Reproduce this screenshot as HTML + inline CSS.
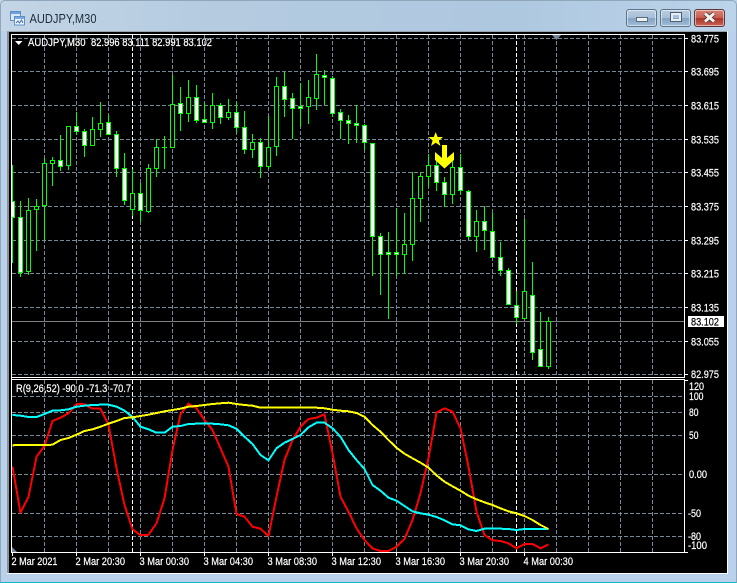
<!DOCTYPE html>
<html><head><meta charset="utf-8"><style>
html,body{margin:0;padding:0;background:#fff;width:737px;height:583px;overflow:hidden}
#w{position:absolute;left:0;top:0;width:737px;height:583px;overflow:hidden;background:#b9d1ea}
#bar{position:absolute;left:0;top:0;width:737px;height:31px;background:linear-gradient(90deg,#c3d5e6,#b4cbe0 30%,#aec8e0 70%,#bcd4ea)}
#edge{position:absolute;left:0;top:0;width:735px;height:581px;border:1px solid #8fa6bb;border-bottom:1px solid #12b6c9;border-radius:5px 5px 0 0}
.b{position:absolute;top:9px;height:16px;border:1px solid #5d7387;border-radius:3px;box-shadow:inset 0 0 0 1px rgba(255,255,255,.5)}
.m{background:linear-gradient(#b8cde1 0,#a6c0d9 48%,#84a3c1 52%,#a0bdd8 100%)}
.c{background:linear-gradient(#d68478 0,#c85e52 48%,#aa3428 52%,#c96454 100%);border-color:#5a3a3a}
#s{position:absolute;left:0;top:0}
text{font-family:"Liberation Sans",sans-serif;font-size:11px;fill:#fff;stroke:#fff;stroke-width:.22px}
</style></head><body><div id="w">
<div id="bar"></div>
<div id="edge"></div>
<svg style="position:absolute;left:10px;top:11px" width="16" height="15" viewBox="0 0 16 15">
<rect x="0.5" y="0.5" width="10" height="9" fill="#dbe9f7" stroke="#5e8fc8"/><rect x="1" y="1" width="9" height="2" fill="#6fa0da"/>
<rect x="4.5" y="5.5" width="10" height="8.5" fill="#eef5fc" stroke="#5e8fc8"/><rect x="5" y="6" width="9" height="2" fill="#7eaade"/>
<path d="M6 12l2-2 1.500 2 2-3 1.500 3" fill="none" stroke="#3f6fae"/></svg>
<div class="b m" style="left:626px;width:29px"><div style="position:absolute;left:9px;top:7px;width:10px;height:3px;background:#eef2f6;border:1px solid #5b6c7c"></div></div>
<div class="b m" style="left:660px;width:29px"><div style="position:absolute;left:10px;top:3px;width:6px;height:4px;border:2px solid #e8edf2;outline:1px solid #4f6070"></div></div>
<div class="b c" style="left:694px;width:29px"><svg style="position:absolute;left:7px;top:1px" width="15" height="13"><path d="M3 2.500L12 10.500M12 2.500L3 10.500" stroke="#3b2a2a" stroke-width="4.500"/><path d="M3 2.500L12 10.500M12 2.500L3 10.500" stroke="#f4f0ee" stroke-width="3"/></svg></div>
<svg id="s" width="737" height="583" viewBox="0 0 737 583">
<defs><clipPath id="cm"><rect x="12" y="35" width="672" height="342"/></clipPath><clipPath id="cs"><rect x="12" y="380" width="672" height="172"/></clipPath></defs>
<text x="29.500" y="23" textLength="67" lengthAdjust="spacingAndGlyphs" style="font-size:12.500px;fill:#1c2c3c;stroke:none">AUDJPY,M30</text>
<rect x="9" y="31" width="718" height="542" fill="#000"/>
<rect x="7" y="31" width="2" height="543" fill="#8b9298"/>
<rect x="7" y="31" width="720" height="1" fill="#9aa5ae"/>
<g shape-rendering="crispEdges" fill="none">
<path d="M727.500 31V574M7 573.500H728" stroke="#fff"/>
<path d="M11.500 34V553M11 34.500H685M684.500 34V378M11 377.500H685M11 379.500H685M684.500 379V553M11 552.500H685" stroke="#fff"/>
<path stroke="#778899" stroke-dasharray="4 2" d="M12 38.500H684M12 71.500H684M12 105.500H684M12 139.500H684M12 172.500H684M12 206.500H684M12 240.500H684M12 273.500H684M12 307.500H684M12 341.500H684M12 374.500H684M12 396.500H684M12 412.500H684M12 435.500H684M12 474.500H684M12 513.500H684M12 536.500H684"/>
<path stroke="#778899" stroke-dasharray="4 2" d="M44.500 35V377M76.500 35V377M108.500 35V377M140.500 35V377M172.500 35V377M204.500 35V377M236.500 35V377M268.500 35V377M300.500 35V377M332.500 35V377M364.500 35V377M396.500 35V377M428.500 35V377M460.500 35V377M492.500 35V377M524.500 35V377M556.500 35V377M588.500 35V377M620.500 35V377M652.500 35V377M44.500 380V552M76.500 380V552M108.500 380V552M140.500 380V552M172.500 380V552M204.500 380V552M236.500 380V552M268.500 380V552M300.500 380V552M332.500 380V552M364.500 380V552M396.500 380V552M428.500 380V552M460.500 380V552M492.500 380V552M524.500 380V552M556.500 380V552M588.500 380V552M620.500 380V552M652.500 380V552"/>
<path stroke="#fff" stroke-dasharray="4 2" d="M132.500 35V377M132.500 380V552M516.500 35V377M516.500 380V552"/>
<path stroke="#808080" d="M12 321.500H684"/>
<g clip-path="url(#cm)">
<path stroke="#00ff00" d="M12.500 165V263M20.500 201V277M28.500 198V275M36.500 199V251M44.500 158V240M52.500 157V186M60.500 135V171M68.500 126V170M76.500 112V135M84.500 129V157M92.500 117V146M100.500 102V137M108.500 115V135M116.500 131V177M124.500 153V205M132.500 169V216M140.500 183V222M148.500 164V213M156.500 139V177M164.500 136V169M172.500 75V147M180.500 87V131M188.500 80V122M196.500 85V123M204.500 103V123M212.500 93V129M220.500 103V124M228.500 99V120M236.500 102V133M244.500 111V154M252.500 134V158M260.500 138V178M268.500 116V169M276.500 77V156M284.500 72V117M292.500 93V139M300.500 83V127M308.500 80V124M316.500 54V110M324.500 70V105M332.500 76V117M340.500 109V139M348.500 115V144M356.500 105V143M364.500 124V150M372.500 143V276M380.500 233V295M388.500 232V319M396.500 208V276M404.500 213V274M412.500 172V261M420.500 172V222M428.500 154V187M436.500 160V191M444.500 177V207M452.500 155V204M460.500 154V195M468.500 190V240M476.500 210V252M484.500 206V250M492.500 213V258M500.500 242V276M508.500 268V305M516.500 291V324M524.500 219V318M532.500 262V360M540.500 312V367M548.500 317V369M162 147.500H167"/>
<path stroke="#00ff00" fill="#fff" d="M10.500 201.500h4v16h-4zM18.500 217.500h4v55h-4zM58.500 160.500h4v6h-4zM74.500 126.500h4v5h-4zM82.500 131.500h4v14h-4zM106.500 122.500h4v12h-4zM114.500 134.500h4v34h-4zM122.500 168.500h4v32h-4zM138.500 193.500h4v17h-4zM178.500 103.500h4v10h-4zM194.500 97.500h4v23h-4zM202.500 119.500h4v3h-4zM218.500 105.500h4v12h-4zM234.500 112.500h4v15h-4zM242.500 127.500h4v22h-4zM258.500 142.500h4v24h-4zM282.500 86.500h4v13h-4zM290.500 98.500h4v10h-4zM298.500 106.500h4v2h-4zM322.500 75.500h4v2h-4zM330.500 78.500h4v35h-4zM338.500 112.500h4v8h-4zM346.500 120.500h4v3h-4zM354.500 123.500h4v2h-4zM362.500 125.500h4v17h-4zM370.500 143.500h4v93h-4zM378.500 236.500h4v18h-4zM386.500 252.500h4v2h-4zM394.500 252.500h4v2h-4zM434.500 165.500h4v17h-4zM442.500 182.500h4v12h-4zM458.500 167.500h4v23h-4zM466.500 191.500h4v45h-4zM482.500 221.500h4v9h-4zM490.500 231.500h4v26h-4zM498.500 257.500h4v13h-4zM506.500 270.500h4v34h-4zM514.500 305.500h4v12h-4zM530.500 295.500h4v57h-4zM538.500 349.500h4v17h-4z"/>
<path stroke="#00ff00" fill="#000" d="M26.500 210.500h4v61h-4zM34.500 206.500h4v3h-4zM42.500 163.500h4v42h-4zM50.500 160.500h4v3h-4zM66.500 126.500h4v39h-4zM90.500 129.500h4v16h-4zM98.500 123.500h4v6h-4zM130.500 193.500h4v16h-4zM146.500 168.500h4v43h-4zM154.500 147.500h4v21h-4zM170.500 104.500h4v43h-4zM186.500 97.500h4v16h-4zM210.500 105.500h4v17h-4zM226.500 112.500h4v5h-4zM250.500 142.500h4v7h-4zM266.500 147.500h4v19h-4zM274.500 86.500h4v60h-4zM306.500 97.500h4v9h-4zM314.500 74.500h4v24h-4zM402.500 244.500h4v10h-4zM410.500 198.500h4v46h-4zM418.500 176.500h4v22h-4zM426.500 165.500h4v11h-4zM450.500 167.500h4v27h-4zM474.500 221.500h4v15h-4zM522.500 291.500h4v27h-4zM546.500 321.500h4v45h-4z"/>
</g>
<g clip-path="url(#cs)" stroke-width="2" stroke-linejoin="round">
<polyline stroke="#ff0000" points="12.500,466.700 20.500,512.700 28.500,496.700 36.500,456.700 44.500,446 52.500,421 60.500,417.700 68.500,413.300 76.500,404 84.500,404.300 92.500,408.700 100.500,408.700 108.500,425 116.500,468.300 124.500,505 132.500,529.300 140.500,535.300 148.500,534.700 156.500,523.300 164.500,498.300 172.500,450 180.500,414.300 188.500,403.700 196.500,408.300 204.500,420 212.500,430 220.500,448.300 228.500,466.700 236.500,514 244.500,516.700 252.500,526.700 260.500,528.700 268.500,536 276.500,496.700 284.500,460 292.500,440 300.500,426.700 308.500,419 316.500,417.700 324.500,414.300 332.500,453.300 340.500,496.700 348.500,511.700 356.500,528.300 364.500,540 372.500,548.300 380.500,551 388.500,551 396.500,546.700 404.500,539 412.500,520 420.500,493.300 428.500,458.300 436.500,412.700 444.500,408.300 452.500,411.700 460.500,428.300 468.500,466.700 476.500,511.700 484.500,535 492.500,540.300 500.500,541 508.500,543.300 516.500,548.300 524.500,544 532.500,544 540.500,548.300 548.500,544.300"/>
<polyline stroke="#00ffff" points="12.500,415 20.500,415.700 28.500,417 36.500,417 44.500,414 52.500,410.700 60.500,410.300 68.500,409.300 76.500,406.700 84.500,405.700 92.500,405 100.500,404.700 108.500,404.700 116.500,406.700 124.500,410.700 132.500,417 140.500,426.700 148.500,429.300 156.500,432.700 164.500,432.700 172.500,426.700 180.500,426 188.500,424 196.500,423.700 204.500,423.700 212.500,423.700 220.500,424.300 228.500,425.300 236.500,428.700 244.500,436.700 252.500,444 260.500,455 268.500,460.300 276.500,448.300 284.500,442.700 292.500,439 300.500,435 308.500,427.300 316.500,422.700 324.500,422.700 332.500,428.300 340.500,436.700 348.500,450 356.500,460 364.500,469 372.500,485 380.500,490.700 388.500,497.700 396.500,500.700 404.500,506 412.500,511.300 420.500,513.300 428.500,514.700 436.500,517 444.500,520.300 452.500,524.300 460.500,525.300 468.500,529.300 476.500,531 484.500,528.700 492.500,528.700 500.500,528.700 508.500,529 516.500,530 524.500,529 532.500,529 540.500,529 548.500,529"/>
<polyline stroke="#ffff00" points="12.500,445.300 20.500,445 44.500,445 52.500,444.700 60.500,440 68.500,438 76.500,434.700 84.500,431 92.500,429.300 100.500,426.700 108.500,423.700 116.500,421 124.500,418 132.500,417.300 140.500,416 148.500,414.700 156.500,413 164.500,411.300 172.500,410 180.500,408.700 188.500,406.700 196.500,406 204.500,405 212.500,404 220.500,403.300 228.500,402.700 236.500,404 244.500,405 252.500,405.700 260.500,407.700 316.500,407.700 324.500,408.300 332.500,409.700 340.500,410.700 348.500,411.300 356.500,413 364.500,416.700 372.500,425 380.500,431.700 388.500,440 396.500,447.700 404.500,453.700 412.500,458.300 420.500,462.700 428.500,467.700 436.500,475.300 444.500,481.700 452.500,486.300 460.500,490.700 468.500,495.700 476.500,499.300 484.500,502.300 492.500,505 500.500,508.300 508.500,511.300 516.500,513.300 524.500,516 532.500,520 540.500,525 548.500,529"/>
</g>
<path stroke="#fff" d="M12.500 553V556M76.500 553V556M140.500 553V556M204.500 553V556M268.500 553V556M332.500 553V556M396.500 553V556M460.500 553V556M524.500 553V556M685 38.500H688M685 71.500H688M685 105.500H688M685 139.500H688M685 172.500H688M685 206.500H688M685 240.500H688M685 273.500H688M685 307.500H688M685 341.500H688M685 374.500H688M685 380.500H688M685 552.500H688"/>
</g>
<path d="M552 35H561L556.500 40Z" fill="#778899"/>
<path d="M12 547L17 552H12Z" fill="#778899"/>
<path d="M15 41H22.500L18.700 45Z" fill="#fff"/>
<polygon points="435.700,132 437.600,137 443,137 438.800,140.500 440.500,146 435.700,142.800 431,146 432.600,140.500 428.500,137 433.800,137" fill="#ffff00"/>
<polygon points="442,145 447,145 447,158 454,152 454,160 444.500,168.500 435,160 435,152 442,158" fill="#ffff00"/>
<rect x="688" y="316" width="36" height="11" fill="#fff"/>
<text x="691" y="325.500" textLength="28" lengthAdjust="spacingAndGlyphs" style="fill:#000;stroke:#000">83.102</text>
<text x="28" y="46" textLength="57.500" lengthAdjust="spacingAndGlyphs">AUDJPY,M30</text>
<text x="91" y="46" textLength="121" lengthAdjust="spacingAndGlyphs">82.996 83.111 82.991 83.102</text>
<text x="16" y="392" textLength="115" lengthAdjust="spacingAndGlyphs">R(9,26,52) -90.0 -71.3 -70.7</text>
<g>
<text x="691" y="42.500" textLength="28" lengthAdjust="spacingAndGlyphs">83.775</text>
<text x="691" y="75.500" textLength="28" lengthAdjust="spacingAndGlyphs">83.695</text>
<text x="691" y="109.500" textLength="28" lengthAdjust="spacingAndGlyphs">83.615</text>
<text x="691" y="143.500" textLength="28" lengthAdjust="spacingAndGlyphs">83.535</text>
<text x="691" y="176.500" textLength="28" lengthAdjust="spacingAndGlyphs">83.455</text>
<text x="691" y="210.500" textLength="28" lengthAdjust="spacingAndGlyphs">83.375</text>
<text x="691" y="244.500" textLength="28" lengthAdjust="spacingAndGlyphs">83.295</text>
<text x="691" y="277.500" textLength="28" lengthAdjust="spacingAndGlyphs">83.215</text>
<text x="691" y="311.500" textLength="28" lengthAdjust="spacingAndGlyphs">83.135</text>
<text x="691" y="345.500" textLength="28" lengthAdjust="spacingAndGlyphs">83.055</text>
<text x="691" y="378" textLength="28" lengthAdjust="spacingAndGlyphs">82.975</text>
<text x="689" y="390" textLength="15" lengthAdjust="spacingAndGlyphs">120</text>
<text x="689" y="400" textLength="14.500" lengthAdjust="spacingAndGlyphs">100</text>
<text x="689" y="416" textLength="9.500" lengthAdjust="spacingAndGlyphs">80</text>
<text x="689" y="439" textLength="9.500" lengthAdjust="spacingAndGlyphs">50</text>
<text x="689" y="478" textLength="18" lengthAdjust="spacingAndGlyphs">0.00</text>
<text x="688" y="517" textLength="13" lengthAdjust="spacingAndGlyphs">-50</text>
<text x="688" y="540" textLength="13" lengthAdjust="spacingAndGlyphs">-80</text>
<text x="688" y="549" textLength="19" lengthAdjust="spacingAndGlyphs">-100</text>
<text x="11.500" y="565" textLength="46" lengthAdjust="spacingAndGlyphs">2 Mar 2021</text>
<text x="75.500" y="565" textLength="49.500" lengthAdjust="spacingAndGlyphs">2 Mar 20:30</text>
<text x="139.500" y="565" textLength="49.500" lengthAdjust="spacingAndGlyphs">3 Mar 00:30</text>
<text x="203.500" y="565" textLength="49.500" lengthAdjust="spacingAndGlyphs">3 Mar 04:30</text>
<text x="267.500" y="565" textLength="49.500" lengthAdjust="spacingAndGlyphs">3 Mar 08:30</text>
<text x="331.500" y="565" textLength="49.500" lengthAdjust="spacingAndGlyphs">3 Mar 12:30</text>
<text x="395.500" y="565" textLength="49.500" lengthAdjust="spacingAndGlyphs">3 Mar 16:30</text>
<text x="459.500" y="565" textLength="49.500" lengthAdjust="spacingAndGlyphs">3 Mar 20:30</text>
<text x="523.500" y="565" textLength="49.500" lengthAdjust="spacingAndGlyphs">4 Mar 00:30</text>
</g>
</svg>
</div></body></html>
